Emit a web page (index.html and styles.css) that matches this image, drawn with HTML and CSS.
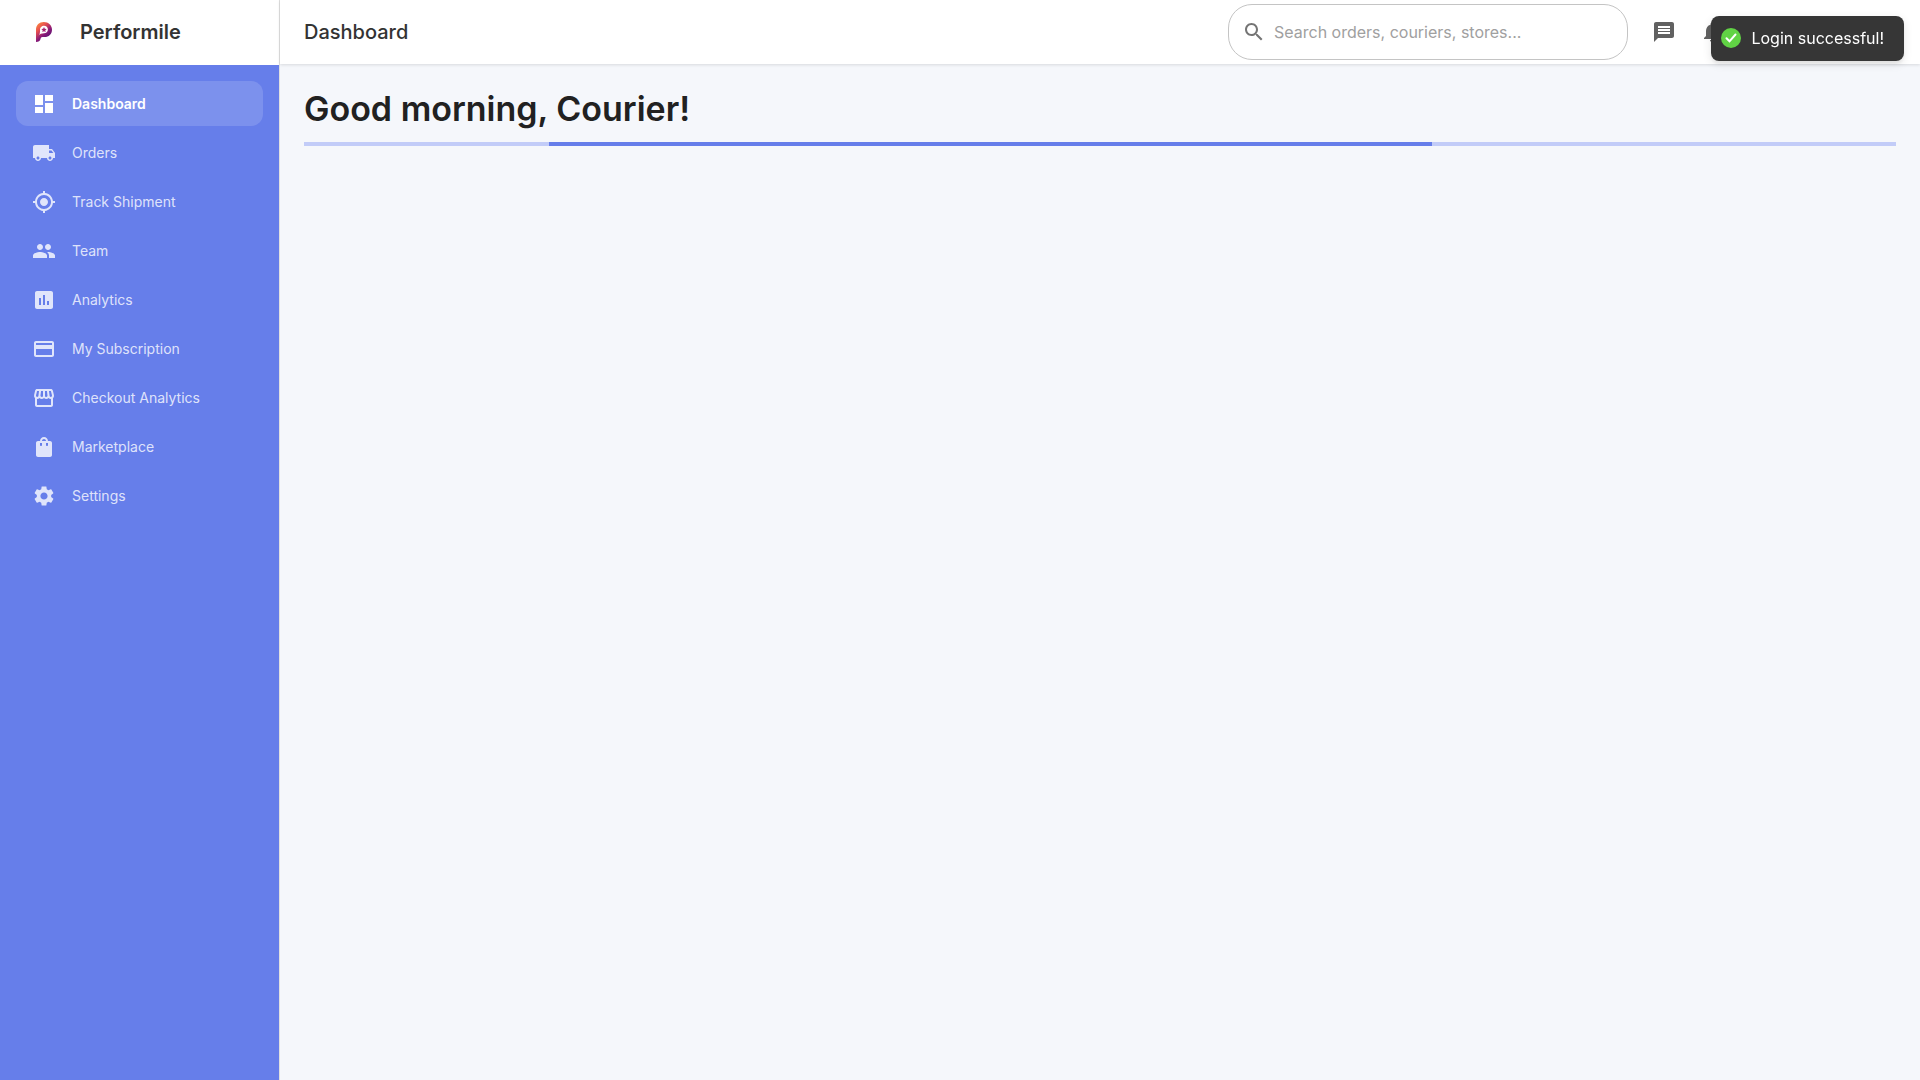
FILE: index.html
```html
<!DOCTYPE html>
<html lang="en">
<head>
<meta charset="utf-8">
<meta name="viewport" content="width=device-width, initial-scale=1">
<title>Performile</title>
<link rel="stylesheet" href="styles.css">
</head>
<body>
<div class="app">
  <aside class="sidebar">
    <div class="brand">
      <svg class="brand-logo" viewBox="0 0 32 32" aria-hidden="true">
        <defs>
          <linearGradient id="logo-fill" x1="0" y1="0" x2="0.7" y2="1">
            <stop offset="0" stop-color="#ff9a3c"></stop>
            <stop offset="0.35" stop-color="#e8504f"></stop>
            <stop offset="0.65" stop-color="#8a1a78"></stop>
            <stop offset="1" stop-color="#4a1070"></stop>
          </linearGradient>
        </defs>
        <path fill="url(#logo-fill)" d="M8 26V13.500C8 9 11.300 6 15.800 6C20.500 6 24 9.300 24 13.700C24 18.200 20.800 21 16.500 21H14.500C13.200 21 12.700 21.800 12.500 23C12.200 25 10.500 26 8 26Z"></path>
        <path fill="#fff" d="M10.500 19.500C12 18.500 12 16.500 12 13.700C12 11.500 13.700 9.800 15.900 9.800C18.200 9.800 19.900 11.500 19.900 13.600C19.900 15.900 18.200 17.300 16 17.300C13.500 17.300 12 18 10.500 19.500Z"></path>
        <path fill="#a3216f" d="M16 11l.8 1.700 1.900.2-1.400 1.300.4 1.900-1.700-.9-1.700.9.400-1.900-1.400-1.300 1.900-.2z"></path>
      </svg>
      <span class="brand-name">Performile</span>
    </div>
    <nav class="nav" aria-label="Main">
      <a class="nav-item nav-item-active" href="#dashboard" aria-current="page">
        <svg class="icon" viewBox="0 0 24 24" aria-hidden="true"><path d="M3 13h8V3H3v10zm0 8h8v-6H3v6zm10 0h8V11h-8v10zm0-18v6h8V3h-8z"></path></svg>
        <span>Dashboard</span>
      </a>
      <a class="nav-item" href="#orders">
        <svg class="icon" viewBox="0 0 24 24" aria-hidden="true"><path d="M20 8h-3V4H3c-1.100 0-2 .9-2 2v11h2c0 1.660 1.340 3 3 3s3-1.340 3-3h6c0 1.660 1.340 3 3 3s3-1.340 3-3h2v-5l-3-4zM6 18.500c-.83 0-1.500-.67-1.500-1.500s.67-1.500 1.500-1.500 1.500.67 1.500 1.500-.67 1.500-1.500 1.500zm13.500-9l1.960 2.500H17V9.500h2.500zm-1.500 9c-.83 0-1.500-.67-1.500-1.500s.67-1.500 1.500-1.500 1.500.67 1.500 1.500-.67 1.500-1.500 1.500z"></path></svg>
        <span>Orders</span>
      </a>
      <a class="nav-item" href="#track">
        <svg class="icon" viewBox="0 0 24 24" aria-hidden="true"><path d="M12 8c-2.210 0-4 1.790-4 4s1.790 4 4 4 4-1.790 4-4-1.790-4-4-4zm8.940 3c-.46-4.170-3.770-7.480-7.940-7.940V1h-2v2.060C6.830 3.520 3.520 6.830 3.060 11H1v2h2.060c.46 4.170 3.770 7.480 7.940 7.940V23h2v-2.060c4.170-.46 7.480-3.770 7.940-7.940H23v-2h-2.060zM12 19c-3.870 0-7-3.130-7-7s3.130-7 7-7 7 3.130 7 7-3.130 7-7 7z"></path></svg>
        <span>Track Shipment</span>
      </a>
      <a class="nav-item" href="#team">
        <svg class="icon" viewBox="0 0 24 24" aria-hidden="true"><path d="M16 11c1.660 0 2.990-1.340 2.990-3S17.660 5 16 5c-1.660 0-3 1.340-3 3s1.340 3 3 3zm-8 0c1.660 0 2.990-1.340 2.990-3S9.660 5 8 5C6.340 5 5 6.340 5 8s1.340 3 3 3zm0 2c-2.330 0-7 1.170-7 3.500V19h14v-2.500c0-2.330-4.670-3.500-7-3.500zm8 0c-.29 0-.62.020-.97.050 1.160.84 1.970 1.970 1.970 3.450V19h6v-2.500c0-2.330-4.670-3.500-7-3.500z"></path></svg>
        <span>Team</span>
      </a>
      <a class="nav-item" href="#analytics">
        <svg class="icon" viewBox="0 0 24 24" aria-hidden="true"><path d="M19 3H5c-1.100 0-2 .9-2 2v14c0 1.100.9 2 2 2h14c1.100 0 2-.9 2-2V5c0-1.100-.9-2-2-2zM9 17H7v-7h2v7zm4 0h-2V7h2v10zm4 0h-2v-4h2v4z"></path></svg>
        <span>Analytics</span>
      </a>
      <a class="nav-item" href="#subscription">
        <svg class="icon" viewBox="0 0 24 24" aria-hidden="true"><path d="M20 4H4c-1.110 0-1.990.89-1.990 2L2 18c0 1.110.89 2 2 2h16c1.110 0 2-.89 2-2V6c0-1.110-.89-2-2-2zm0 14H4v-6h16v6zm0-10H4V6h16v2z"></path></svg>
        <span>My Subscription</span>
      </a>
      <a class="nav-item" href="#checkout">
        <svg class="icon" viewBox="0 0 24 24" aria-hidden="true"><path d="M21.900 8.890l-1.050-4.370c-.22-.9-1-1.520-1.910-1.520H5.050c-.9 0-1.690.63-1.900 1.520L2.100 8.890c-.24 1.020-.02 2.060.62 2.880.08.11.19.19.28.29V19c0 1.100.9 2 2 2h14c1.100 0 2-.9 2-2v-6.940c.09-.09.2-.18.28-.28.64-.82.87-1.870.62-2.890zm-2.990-3.900l1.050 4.370c.1.420.010.840-.25 1.170-.14.18-.44.47-.94.47-.61 0-1.140-.49-1.210-1.140L16.980 5l1.930-.01zM13 5h1.960l.54 4.520c.05.39-.07.78-.33 1.070-.22.26-.54.41-.95.41-.67 0-1.220-.59-1.220-1.310V5zM8.490 9.520L9.040 5H11v4.690c0 .72-.55 1.310-1.290 1.310-.34 0-.65-.15-.89-.41-.25-.29-.37-.68-.33-1.070zm-4.450-.16L5.050 5h1.970l-.58 4.860c-.08.65-.6 1.140-1.210 1.140-.49 0-.8-.29-.93-.47-.27-.32-.36-.75-.26-1.170zM5 19v-6.030c.08.010.15.030.23.030.87 0 1.660-.36 2.240-.95.6.6 1.400.95 2.310.95.87 0 1.650-.36 2.230-.93.59.57 1.390.93 2.290.93.84 0 1.640-.35 2.240-.95.58.59 1.370.95 2.240.95.08 0 .15-.02.23-.03V19H5z"></path></svg>
        <span>Checkout Analytics</span>
      </a>
      <a class="nav-item" href="#marketplace">
        <svg class="icon" viewBox="0 0 24 24" aria-hidden="true"><path d="M18 6h-2c0-2.210-1.790-4-4-4S8 3.790 8 6H6c-1.100 0-2 .9-2 2v12c0 1.100.9 2 2 2h12c1.100 0 2-.9 2-2V8c0-1.100-.9-2-2-2zm-8 4c0 .55-.45 1-1 1s-1-.45-1-1V8h2v2zm2-6c1.100 0 2 .9 2 2h-4c0-1.100.9-2 2-2zm4 6c0 .55-.45 1-1 1s-1-.45-1-1V8h2v2z"></path></svg>
        <span>Marketplace</span>
      </a>
      <a class="nav-item" href="#settings">
        <svg class="icon" viewBox="0 0 24 24" aria-hidden="true"><path d="M19.140 12.940c.04-.3.060-.61.060-.94 0-.32-.02-.64-.07-.94l2.030-1.580c.18-.14.23-.41.12-.61l-1.920-3.320c-.12-.22-.37-.29-.59-.22l-2.390.96c-.5-.38-1.030-.7-1.620-.94l-.36-2.540c-.04-.24-.24-.41-.48-.41h-3.840c-.24 0-.43.17-.47.41l-.36 2.540c-.59.24-1.130.57-1.620.94l-2.390-.96c-.22-.08-.47 0-.59.22L2.740 8.870c-.12.21-.08.47.12.61l2.030 1.580c-.05.3-.09.63-.09.94s.02.64.07.94l-2.030 1.580c-.18.14-.23.41-.12.61l1.920 3.320c.12.22.37.29.59.22l2.390-.96c.5.38 1.030.7 1.620.94l.36 2.540c.05.24.24.41.48.41h3.840c.24 0 .44-.17.47-.41l.36-2.540c.59-.24 1.130-.56 1.620-.94l2.390.96c.22.08.47 0 .59-.22l1.920-3.320c.12-.22.070-.47-.12-.61l-2.010-1.580zM12 15.600c-1.980 0-3.600-1.620-3.600-3.600s1.620-3.600 3.600-3.600 3.600 1.620 3.600 3.600-1.620 3.600-3.600 3.600z"></path></svg>
        <span>Settings</span>
      </a>
    </nav>
  </aside>
  <div class="page">
    <header class="topbar">
      <div class="topbar-title">Dashboard</div>
      <label class="search">
        <svg class="icon search-icon" viewBox="0 0 24 24" aria-hidden="true"><path d="M15.500 14h-.79l-.28-.27C15.410 12.590 16 11.110 16 9.500 16 5.910 13.090 3 9.500 3S3 5.910 3 9.500 5.910 16 9.500 16c1.610 0 3.090-.59 4.230-1.570l.27.28v.79l5 4.990L20.490 19l-4.990-5zm-6 0C7.010 14 5 11.990 5 9.500S7.010 5 9.500 5 14 7.010 14 9.500 11.990 14 9.500 14z"></path></svg>
        <input class="search-input" type="text" aria-label="Search" placeholder="Search orders, couriers, stores...">
      </label>
      <div class="actions">
        <button class="icon-button" type="button" aria-label="Messages">
          <svg class="icon" viewBox="0 0 24 24" aria-hidden="true"><path d="M20 2H4c-1.100 0-1.990.9-1.990 2L2 22l4-4h14c1.100 0 2-.9 2-2V4c0-1.100-.9-2-2-2zM6 9h12v2H6V9zm12 5H6v-2h12v2zm0-6H6V6h12v2z"></path></svg>
        </button>
        <button class="icon-button" type="button" aria-label="Notifications">
          <svg class="icon" viewBox="0 0 24 24" aria-hidden="true"><path d="M12 22c1.100 0 2-.9 2-2h-4c0 1.100.89 2 2 2zm6-6v-5c0-3.070-1.640-5.640-4.500-6.320V4c0-.83-.67-1.500-1.500-1.500s-1.500.67-1.500 1.500v.68C7.630 5.360 6 7.920 6 11v5l-2 2v1h16v-1l-2-2z"></path></svg>
        </button>
      </div>
    </header>
    <main class="content">
      <h1 class="greeting">Good morning, Courier!</h1>
      <div class="progress" role="progressbar" aria-label="Loading dashboard">
        <div class="progress-bar" style="margin-left: 15.4%; width: 55.45%"></div>
      </div>
    </main>
  </div>
</div>
<div class="toast" role="status">
  <svg class="toast-icon" viewBox="0 0 20 20" aria-hidden="true"><circle cx="10" cy="10" r="10" fill="#61d345"></circle><path d="M5.500 10.300l3 3 6-6.800" fill="none" stroke="#fff" stroke-width="2" stroke-linecap="round"></path></svg>
  <span>Login successful!</span>
</div>
</body>
</html>
```
FILE: styles.css
```css
* {
  box-sizing: border-box;
}

body {
  margin: 0;
  background: #f5f7fb;
  color: #212121;
  font-family: Inter, "Liberation Sans", sans-serif;
  font-size: 16px;
  line-height: 24px;
}

.app {
  display: flex;
  min-height: 100vh;
}

.icon {
  display: block;
  flex: none;
  width: 24px;
  height: 24px;
  fill: currentColor;
}

.sidebar {
  flex: none;
  width: 280px;
  background: #667eea;
  border-right: 1px solid #e0e0e0;
}

.brand {
  display: flex;
  align-items: center;
  gap: 20px;
  height: 65px;
  padding: 0 28px;
  border-bottom: 1px solid #fff;
  background: #fff;
}

.brand-logo {
  width: 32px;
  height: 32px;
}

.brand-name {
  color: #333;
  font-size: 20px;
  font-weight: 600;
}

.nav {
  display: flex;
  flex-direction: column;
  gap: 4px;
  padding: 16px;
}

.nav-item {
  display: flex;
  align-items: center;
  gap: 16px;
  height: 45px;
  padding: 0 16px;
  border-radius: 12px;
  color: rgba(255, 255, 255, 0.8);
  font-size: 14px;
  font-weight: 400;
  text-decoration: none;
}

.nav-item-active {
  background: rgba(255, 255, 255, 0.15);
  color: #fff;
  font-weight: 600;
}

.page {
  flex: 1;
  min-width: 0;
}

.topbar {
  display: flex;
  align-items: center;
  height: 64px;
  padding: 0 24px;
  background: #fff;
  box-shadow: 0 1px 3px rgba(0, 0, 0, 0.12);
}

.topbar-title {
  flex: 1;
  color: #333;
  font-size: 20px;
  font-weight: 500;
}

.search {
  display: flex;
  align-items: center;
  gap: 8px;
  width: 400px;
  height: 56px;
  padding: 0 13px;
  border: 1px solid #c4c4c4;
  border-radius: 24px;
}

.search-icon {
  color: #757575;
}

.search-input {
  flex: 1;
  min-width: 0;
  padding: 0;
  border: 0;
  outline: 0;
  background: none;
  color: #212121;
  font: inherit;
}

.search-input::placeholder {
  color: #a0a0a0;
}

.actions {
  display: flex;
  gap: 8px;
  width: 252px;
  margin-left: 16px;
}

.icon-button {
  padding: 8px;
  border: 0;
  border-radius: 50%;
  background: none;
  color: #616161;
}

.content {
  padding: 24px;
}

.greeting {
  margin: 0 0 12px;
  font-size: 34px;
  font-weight: 600;
  line-height: 42px;
}

.progress {
  height: 4px;
  overflow: hidden;
  background: #c2ccf8;
}

.progress-bar {
  height: 4px;
  background: #667eea;
}

.toast {
  position: fixed;
  top: 16px;
  right: 16px;
  display: flex;
  align-items: center;
  gap: 10px;
  height: 45px;
  padding: 0 20px 1px 10px;
  border-radius: 8px;
  background: #363636;
  box-shadow: 0 3px 10px rgba(0, 0, 0, 0.1), 0 3px 3px rgba(0, 0, 0, 0.05);
  color: #fff;
}

.toast-icon {
  width: 20px;
  height: 20px;
}
```
